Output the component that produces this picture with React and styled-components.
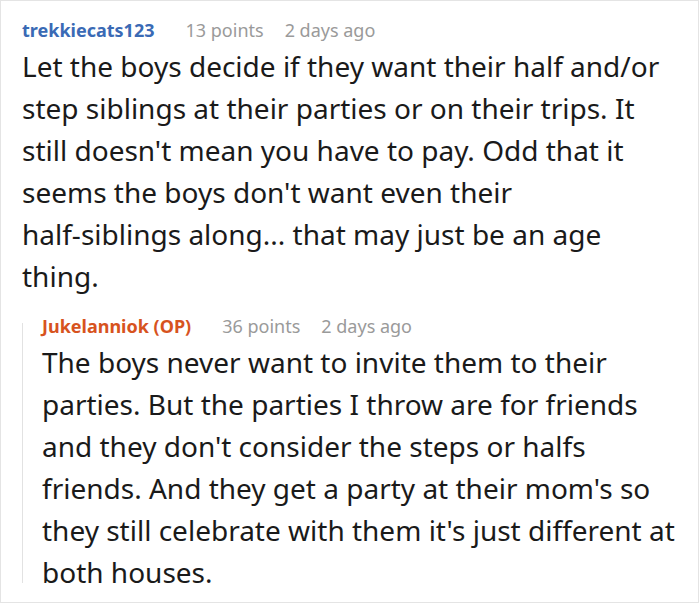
import React from "react";
import styled, { createGlobalStyle } from "styled-components";

const GlobalStyle = createGlobalStyle`
  html, body {
    margin: 0;
    padding: 0;
    background: #fff;
  }
  body {
    font-family: "Noto Sans", "Open Sans", sans-serif;
  }
`;

const Frame = styled.div`
  box-sizing: border-box;
  width: 699px;
  height: 603px;
  border: 1px solid #e4e4e4;
  padding: 16px 20px 0 21px;
  overflow: hidden;
`;

const Comment = styled.div`
  display: flex;
  flex-direction: column;
`;

const Reply = styled.div`
  position: relative;
  margin-top: 16px;
  padding-left: 20px;
  display: flex;
  flex-direction: column;

  &::before {
    content: "";
    position: absolute;
    left: 0;
    top: 10px;
    bottom: 10px;
    width: 1px;
    background: #e2e2e2;
  }
`;

const Meta = styled.div`
  display: flex;
  align-items: baseline;
  font-size: 18px;
  line-height: 26px;
`;

const Author = styled.span`
  font-weight: 700;
  color: ${(p) => (p.$op ? "#d7531e" : "#3a6ab5")};
  margin-right: 31px;
`;

const Stat = styled.span`
  color: #9a9a9a;
  margin-right: 21px;
`;

const Body = styled.p`
  margin: 2px 0 0;
  font-size: 28px;
  line-height: 42px;
  color: #1a1a1a;
`;

const Word = styled.span`
  white-space: nowrap;
`;

const App = () => {
  return (
    <>
      <GlobalStyle />
      <Frame>
        <Comment>
          <Meta>
            <Author>trekkiecats123</Author>
            <Stat>13 points</Stat>
            <Stat>2 days ago</Stat>
          </Meta>
          <Body>
            Let the boys decide if they want their half and/or step siblings at
            their parties or on their trips. It still doesn't mean you have to
            pay. Odd that it seems the boys don't want even their{" "}
            <Word>half-siblings</Word> along... that may just be an age thing.
          </Body>
          <Reply>
            <Meta>
              <Author $op>Jukelanniok (OP)</Author>
              <Stat>36 points</Stat>
              <Stat>2 days ago</Stat>
            </Meta>
            <Body>
              The boys never want to invite them to their parties. But the
              parties I throw are for friends and they don't consider the steps
              or halfs friends. And they get a party at their mom's so they
              still celebrate with them it's just different at both houses.
            </Body>
          </Reply>
        </Comment>
      </Frame>
    </>
  );
};

export default App;
